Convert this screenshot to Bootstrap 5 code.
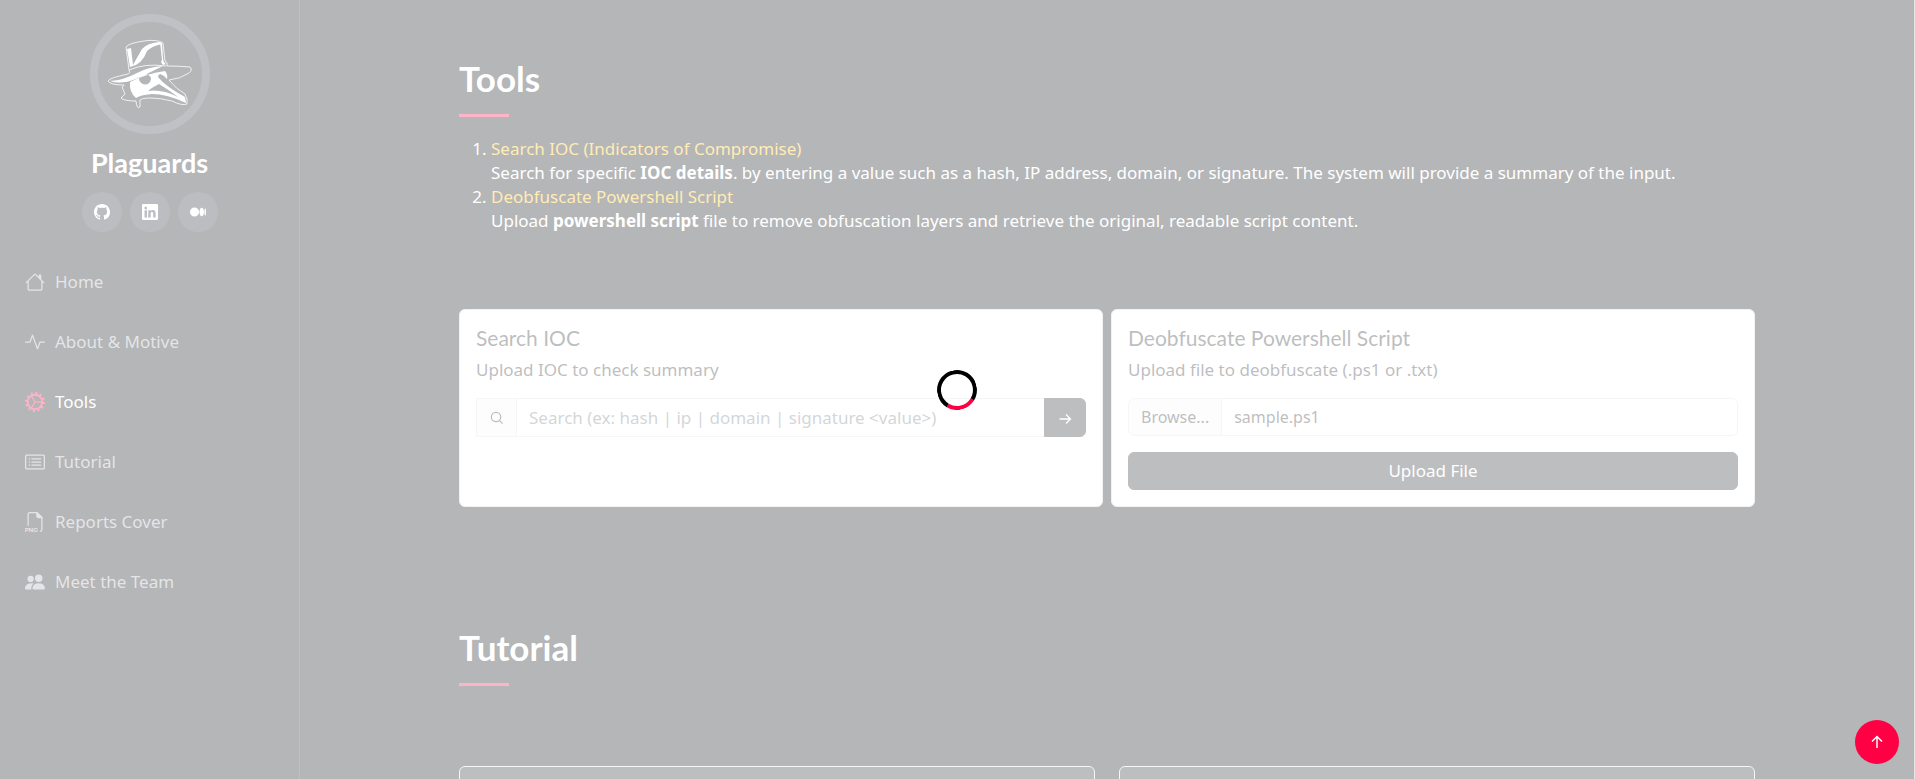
<!DOCTYPE html>
<html lang="en">
<head>
<meta charset="utf-8">
<meta name="viewport" content="width=device-width, initial-scale=1">
<title>Plaguards</title>
<link href="https://cdn.jsdelivr.net/npm/bootstrap@5.3.0/dist/css/bootstrap.min.css" rel="stylesheet">
<style>
  :root { --accent: #ff0044; --ink: #060b10; --side: 300px; }
  html { background: #e6e6e6; }
  body { font-family: "Noto Sans", sans-serif; font-size: 17px; line-height: 24px; background: #e6e6e6; color: #fff; }
  html, body { height: 100%; overflow: hidden; }
  .shell { background: var(--ink); margin-right: 1px; }
  h1, h2, h5 { font-family: Lato, "Open Sans", sans-serif; }
  .side-bar { width: var(--side); border-right: 1px solid #282e37; padding: 14px 15px 0; }
  .portrait { width: 120px; height: 120px; border: 8px solid #2c2f3f; border-radius: 50%; }
  .site-name { font-size: 27px; line-height: 28px; font-weight: 700; margin: 15px 0; }
  .social { width: 40px; height: 40px; border-radius: 50%; background: #212431; color: #fff; }
  .side-menu { margin-top: 20px; }
  .side-menu a { height: 60px; padding: 0 10px; gap: 10px; color: #a8a9b4; }
  .side-menu svg { width: 20px; height: 20px; }
  .side-menu a.active { color: #fff; }
  .side-menu a.active svg { color: var(--accent); }
  main { min-width: 0; padding-top: 60px; overflow: hidden; }
  .heading { font-size: 35px; line-height: 36px; font-weight: 700; margin-bottom: 20px; }
  .heading::after { content: ""; display: block; width: 50px; height: 3px; margin-top: 18px; background: var(--accent); }
  .tool-list { padding-left: 32px; margin-bottom: 76px; }
  .tool-list a { color: #ffc107; }
  .tool-panel { color: #212529; border: 1px solid #d3d4d5; border-radius: 6px; min-height: 198px; padding: 16px; }
  .tool-panel h5 { font-size: 21px; line-height: 24px; margin-bottom: 8px; font-weight: 400; }
  .tool-panel .form-control, .tool-panel .btn { font-size: 17px; line-height: 24px; }
  .tool-panel .input-group-text { font-size: 16px; line-height: 24px; padding: 6px 12px; }
  .tool-panel .form-control::placeholder { color: #6c757d; }
  .picker input { width: 1px; height: 1px; opacity: 0; }
  .tool-panel .picker-name { min-width: 0; font-size: 16px; }
  .tutorial { margin-top: 122px; }
  .guides { padding-top: 60px; }
  .guide { height: 240px; border: 1px solid #dee2e6; border-radius: 6px; background: #212529; }
  .veil { inset: 0 1px 0 0; background: rgba(255,255,255,.7); z-index: 1050; }
  .ring { width: 40px; height: 40px; border: 4px solid #000; border-bottom-color: var(--accent); border-radius: 50%; transform: rotate(-14deg); }
  .to-top { right: 16px; bottom: 15px; width: 44px; height: 44px; background: var(--accent); z-index: 1060; }
</style>
</head>
<body>
<div class="shell d-flex h-100">
  <header class="side-bar flex-shrink-0 h-100">
    <div class="text-center">
      <div class="portrait mx-auto">
        <svg viewBox="108 22 84 104" width="84" height="104" role="img" aria-label="Plague doctor">
          <g fill="none" stroke="#fff" stroke-width=".8" stroke-linejoin="round">
            <path d="M126 47Q129 43 144 41Q157 39 163 43L165 61Q168 62 167 66Q180 66 190 67Q193 70 189 73Q180 79 169 80Q176 89 185 94Q188 99 187 104Q182 106 172 101Q160 98 151 98Q142 98 140 100V107Q137 110 136 101Q124 101 121 98L125 94L122 87Q124 86 124 85Q110 85 108 81Q109 78 128 74Q131 73 129 70Z"/>
            <path d="M129 70Q145 63 166 66"/>
          </g>
          <g fill="#fff">
            <path d="M127 49L131 48L133 65Q138 56 142 49Q147 43 160 42L162 44Q152 46 147 51Q142 65 130 67Z"/>
            <path d="M110 81Q124 80 137 73Q148 67 163 66Q151 72 136 79Q121 85 110 81Z"/>
            <path d="M160 42L162 44L163 58Q163 62 166 64L163 65Q160 62 162 60Z"/>
            <path fill-rule="evenodd" d="M130 82Q145 74 165 71Q168 74 167 79Q164 75 160 74Q158 75 158 77Q165 86 185 97L186 103Q167 94 152 94Q140 95 136 98Q129 92 130 82ZM139 79a6 6 0 1 0 12-1Q149 74 145 74Q140 74 139 79ZM159 84Q151 88 148 91Q162 89 178 97Q169 90 159 84Z"/>
          </g>
        </svg>
      </div>
      <h1 class="site-name">Plaguards</h1>
      <div class="d-flex justify-content-center gap-2">
        <a class="social d-flex align-items-center justify-content-center" href="#" aria-label="GitHub"><svg width="16" height="16" viewBox="0 0 16 16" fill="currentColor"><path d="M8 0C3.58 0 0 3.58 0 8c0 3.54 2.29 6.53 5.47 7.59.4.07.55-.17.55-.38 0-.19-.01-.82-.01-1.49-2.01.37-2.53-.49-2.69-.94-.09-.23-.48-.94-.82-1.13-.28-.15-.68-.52-.01-.53.63-.01 1.08.58 1.23.82.72 1.21 1.87.87 2.33.66.07-.52.28-.87.51-1.07-1.78-.2-3.64-.89-3.64-3.95 0-.87.31-1.59.82-2.15-.08-.2-.36-1.02.08-2.12 0 0 .67-.21 2.2.82.64-.18 1.32-.27 2-.27s1.36.09 2 .27c1.53-1.04 2.2-.82 2.2-.82.44 1.1.16 1.92.08 2.12.51.56.82 1.27.82 2.15 0 3.07-1.87 3.75-3.65 3.95.29.25.54.73.54 1.48 0 1.07-.01 1.93-.01 2.2 0 .21.15.46.55.38A8.01 8.01 0 0 0 16 8c0-4.42-3.58-8-8-8"/></svg></a>
        <a class="social d-flex align-items-center justify-content-center" href="#" aria-label="LinkedIn"><svg width="16" height="16" viewBox="0 0 16 16" fill="currentColor"><path d="M0 1.146C0 .513.526 0 1.175 0h13.65C15.474 0 16 .513 16 1.146v13.708c0 .633-.526 1.146-1.175 1.146H1.175C.526 16 0 15.487 0 14.854zm4.943 12.248V6.169H2.542v7.225zm-1.2-8.212c.837 0 1.358-.554 1.358-1.248-.015-.709-.52-1.248-1.342-1.248S2.4 3.226 2.4 3.934c0 .694.521 1.248 1.327 1.248zm4.908 8.212V9.359c0-.216.016-.432.08-.586.173-.431.568-.878 1.232-.878.869 0 1.216.662 1.216 1.634v3.865h2.401V9.25c0-2.22-1.184-3.252-2.764-3.252-1.274 0-1.845.7-2.165 1.193v.025h-.016l.016-.025V6.169h-2.4c.03.678 0 7.225 0 7.225z"/></svg></a>
        <a class="social d-flex align-items-center justify-content-center" href="#" aria-label="Medium"><svg width="16" height="16" viewBox="0 0 16 16" fill="currentColor"><path d="M9.025 8c0 2.485-2.02 4.5-4.513 4.5A4.506 4.506 0 0 1 0 8c0-2.486 2.02-4.5 4.512-4.5A4.506 4.506 0 0 1 9.025 8m4.95 0c0 2.34-1.01 4.236-2.256 4.236S9.463 10.339 9.463 8c0-2.34 1.01-4.236 2.256-4.236S13.975 5.661 13.975 8M16 8c0 2.096-.355 3.795-.794 3.795-.438 0-.793-1.7-.793-3.795 0-2.096.355-3.795.794-3.795.438 0 .793 1.699.793 3.795"/></svg></a>
      </div>
    </div>
    <nav class="side-menu" aria-label="Sections">
      <a class="d-flex align-items-center text-decoration-none" href="#home"><svg viewBox="0 0 16 16" fill="currentColor"><path d="M8.707 1.5a1 1 0 0 0-1.414 0L.646 8.146a.5.5 0 0 0 .708.708L2 8.207V13.5A1.5 1.5 0 0 0 3.5 15h9a1.5 1.5 0 0 0 1.5-1.5V8.207l.646.647a.5.5 0 0 0 .708-.708L13 5.793V2.5a.5.5 0 0 0-.5-.5h-1a.5.5 0 0 0-.5.5v1.293zM13 7.207V13.5a.5.5 0 0 1-.5.5h-9a.5.5 0 0 1-.5-.5V7.207l5-5z"/></svg><span>Home</span></a>
      <a class="d-flex align-items-center text-decoration-none" href="#about"><svg viewBox="0 0 16 16" fill="currentColor"><path fill-rule="evenodd" d="M6 2a.5.5 0 0 1 .47.33L10 12.036l1.53-4.208A.5.5 0 0 1 12 7.5h3.5a.5.5 0 0 1 0 1h-3.15l-1.88 5.17a.5.5 0 0 1-.94 0L6 3.964 4.47 8.171A.5.5 0 0 1 4 8.5H.5a.5.5 0 0 1 0-1h3.15l1.88-5.17A.5.5 0 0 1 6 2"/></svg><span>About &amp; Motive</span></a>
      <a class="active d-flex align-items-center text-decoration-none" href="#tools"><svg viewBox="0 0 16 16" fill="none" stroke="currentColor"><circle cx="8" cy="8" r="5.8" stroke-width="1.5"/><circle cx="8" cy="8" r="7.2" stroke-width="1.6" stroke-dasharray="1.7 2.07"/><path d="M8 8h6M8 8L5 3M8 8l-3 5"/></svg><span>Tools</span></a>
      <a class="d-flex align-items-center text-decoration-none" href="#tutorial"><svg viewBox="0 0 16 16" fill="none" stroke="currentColor"><rect x=".5" y="2.5" width="15" height="11" rx="1"/><path stroke-linecap="round" d="M5.5 5.5h7M5.5 8h7M5.5 10.5h7"/><path d="M3 5.5h1M3 8h1M3 10.5h1"/></svg><span>Tutorial</span></a>
      <a class="d-flex align-items-center text-decoration-none" href="#reports"><svg viewBox="0 0 16 16" fill="none" stroke="currentColor"><path d="M2.5 11V2A1.5 1.5 0 0 1 4 .5h5.5l4 4V14a1.5 1.5 0 0 1-1.5 1.5"/><path d="M9.5.5V3A1.5 1.5 0 0 0 11 4.500h2.500z" fill="currentColor"/><text x="-.3" y="16" font-family="Liberation Sans, sans-serif" font-weight="700" font-size="5" fill="currentColor" stroke="none">PNG</text></svg><span>Reports Cover</span></a>
      <a class="d-flex align-items-center text-decoration-none" href="#team"><svg viewBox="0 0 16 16" fill="currentColor"><path d="M7 14s-1 0-1-1 1-4 5-4 5 3 5 4-1 1-1 1zm4-6a3 3 0 1 0 0-6 3 3 0 0 0 0 6m-5.784 6A2.240 2.240 0 0 1 5 13c0-1.355.68-2.750 1.936-3.720A6.300 6.300 0 0 0 5 9c-4 0-5 3-5 4s1 1 1 1zM4.500 8a2.500 2.500 0 1 0 0-5 2.500 2.500 0 0 0 0 5"/></svg><span>Meet the Team</span></a>
    </nav>
  </header>

  <main class="flex-grow-1">
    <section class="container" id="tools">
      <h2 class="heading">Tools</h2>
      <ol class="tool-list">
        <li><a class="text-decoration-none" href="#ioc">Search IOC (Indicators of Compromise)</a><br>Search for specific <strong>IOC details</strong>. by entering a value such as a hash, IP address, domain, or signature. The system will provide a summary of the input.</li>
        <li><a class="text-decoration-none" href="#deob">Deobfuscate Powershell Script</a><br>Upload <strong>powershell script</strong> file to remove obfuscation layers and retrieve the original, readable script content.</li>
      </ol>
      <div class="row gx-2">
        <div class="col-lg-6">
          <form class="tool-panel bg-white" id="ioc">
            <h5>Search IOC</h5>
            <label class="mb-3" for="ioc-value">Upload IOC to check summary</label>
            <div class="input-group">
              <span class="input-group-text rounded-0"><svg width="15" height="25" viewBox="0 0 16 24" fill="none" stroke="currentColor" stroke-width="1.300"><circle cx="7.500" cy="11.500" r="5"/><path d="M11 15l3.500 3.500"/></svg></span>
              <input class="form-control" id="ioc-value" type="text" placeholder="Search (ex: hash | ip | domain | signature &lt;value&gt;)">
              <button class="btn btn-dark" type="button" aria-label="Search"><svg width="16" height="16" viewBox="0 0 16 16" fill="none" stroke="currentColor" stroke-width="1.300"><path d="M2.500 8h11M9 3.500L13.500 8 9 12.500"/></svg></button>
            </div>
          </form>
        </div>
        <div class="col-lg-6">
          <form class="tool-panel bg-white" id="deob">
            <h5>Deobfuscate Powershell Script</h5>
            <label class="mb-3" for="script-file">Upload file to deobfuscate (.ps1 or .txt)</label>
            <div class="input-group mb-3 picker">
              <label class="input-group-text" for="script-file">Browse...</label>
              <span class="form-control picker-name rounded-end">sample.ps1</span>
              <input class="position-absolute" id="script-file" type="file">
            </div>
            <button class="btn btn-dark w-100" type="button">Upload File</button>
          </form>
        </div>
      </div>
    </section>
    <section class="container tutorial" id="tutorial">
      <h2 class="heading">Tutorial</h2>
      <div class="guides row">
        <div class="col-6"><div class="guide"></div></div>
        <div class="col-6"><div class="guide"></div></div>
      </div>
    </section>
  </main>
</div>
<div class="veil position-fixed d-flex align-items-center justify-content-center" role="status" aria-label="Loading"><div class="ring"></div></div>
<a class="to-top position-fixed rounded-circle d-flex align-items-center justify-content-center text-white" href="#" aria-label="Back to top"><svg width="16" height="16" viewBox="0 0 16 16" fill="none" stroke="currentColor" stroke-width="1.500"><path d="M8 14V2.500M3 7.500l5-5 5 5"/></svg></a>
<script src="https://cdn.jsdelivr.net/npm/bootstrap@5.3.0/dist/js/bootstrap.bundle.min.js"></script>
</body>
</html>
